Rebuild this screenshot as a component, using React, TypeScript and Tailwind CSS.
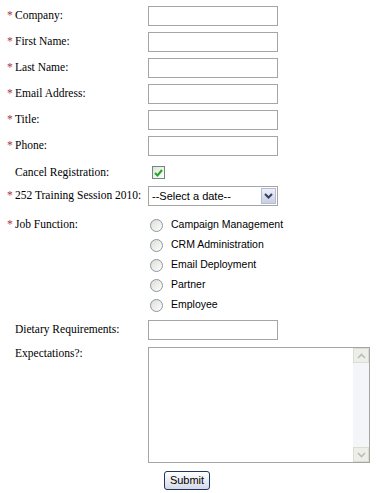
import React from 'react'

const labelFont = { fontFamily: '"Liberation Serif", "Times New Roman", serif' }

const Star = () => (
  <span className="inline-block w-[8px] text-[#a8344c]">*</span>
)

const Label = ({ text, req }: { text: string; req?: boolean }) => (
  <div className="w-[141px] shrink-0 text-[11.5px] text-black whitespace-nowrap" style={labelFont}>
    {req ? <Star /> : <span className="inline-block w-[8px]" />}
    {text}
  </div>
)

const TextBox = () => (
  <div className="h-[20px] w-[130px] border border-[#a5a5a5] bg-white" />
)

const InputRow = ({ text, req }: { text: string; req?: boolean }) => (
  <div className="flex h-[26px] items-center">
    <Label text={text} req={req} />
    <TextBox />
  </div>
)

const Radio = ({ text }: { text: string }) => (
  <div className="flex h-[20px] items-center">
    <span className="ml-[2px] h-[13px] w-[13px] rounded-full border border-[#8c969c] bg-gradient-to-br from-[#dcdcd6] to-white" />
    <span className="ml-[8px] text-[10.5px] text-black" style={{ fontFamily: '"Liberation Sans", Arial, sans-serif' }}>
      {text}
    </span>
  </div>
)

const Arrow = ({ up }: { up?: boolean }) => (
  <svg width="9" height="6" viewBox="0 0 9 6">
    <polyline
      points={up ? '1,5 4.5,1.5 8,5' : '1,1 4.5,4.5 8,1'}
      fill="none"
      stroke="#b8bcbc"
      strokeWidth="1.6"
    />
  </svg>
)

export default function App() {
  return (
    <div className="min-h-[493px] w-[379px] bg-white pl-[7px] pt-[3px]">
      <InputRow text="Company:" req />
      <InputRow text="First Name:" req />
      <InputRow text="Last Name:" req />
      <InputRow text="Email Address:" req />
      <InputRow text="Title:" req />
      <InputRow text="Phone:" req />

      <div className="flex h-[27px] items-center">
        <Label text="Cancel Registration:" />
        <span className="ml-[4px] flex h-[13px] w-[13px] items-center justify-center border border-[#6f8a7c] bg-gradient-to-br from-[#dfe4dc] to-white">
          <svg width="9" height="8" viewBox="0 0 9 8">
            <polyline points="1,4 3.5,6.5 8,1" fill="none" stroke="#22a52a" strokeWidth="2" />
          </svg>
        </span>
      </div>

      <div className="flex h-[28px] items-start">
        <div className="flex h-[20px] items-center">
          <Label text="252 Training Session 2010:" req />
        </div>
        <div className="flex h-[20px] w-[130px] items-center justify-between border border-[#a5a5a5] bg-white">
          <span className="pl-[3px] text-[11px] text-black" style={{ fontFamily: '"Liberation Sans", Arial, sans-serif' }}>
            --Select a date--
          </span>
          <span className="mr-[1px] flex h-[16px] w-[15px] items-center justify-center border border-[#b5bcd4] bg-gradient-to-b from-[#eef0f8] to-[#c9cee2]">
            <svg width="9" height="6" viewBox="0 0 9 6">
              <polyline points="1,1 4.5,4.5 8,1" fill="none" stroke="#34405e" strokeWidth="2" />
            </svg>
          </span>
        </div>
      </div>

      <div className="flex items-start pt-[1px]">
        <div className="flex h-[20px] items-center">
          <Label text="Job Function:" req />
        </div>
        <div className="flex flex-col">
          <Radio text="Campaign Management" />
          <Radio text="CRM Administration" />
          <Radio text="Email Deployment" />
          <Radio text="Partner" />
          <Radio text="Employee" />
        </div>
      </div>

      <div className="flex h-[30px] items-center">
        <Label text="Dietary Requirements:" />
        <TextBox />
      </div>

      <div className="flex items-start">
        <div className="mt-[2px] flex h-[14px] items-center">
          <Label text="Expectations?:" />
        </div>
        <div className="mt-[2px] flex h-[116px] w-[222px] justify-end border border-[#a5a5a5] bg-white">
          <div className="flex w-[16px] flex-col justify-between bg-[#f4f5f9]">
            <span className="flex h-[15px] items-center justify-center border border-[#dcdcd2] bg-[#eeeee8]">
              <Arrow up />
            </span>
            <span className="flex h-[15px] items-center justify-center border border-[#dcdcd2] bg-[#eeeee8]">
              <Arrow />
            </span>
          </div>
        </div>
      </div>

      <div className="mt-[8px] flex">
        <div className="w-[141px] shrink-0" />
        <button
          className="ml-[16px] flex h-[19px] w-[46px] items-center justify-center rounded-[3px] border border-[#1f3660] bg-gradient-to-b from-white to-[#d6d9e8] text-[11px] text-black"
          style={{ fontFamily: '"Liberation Sans", Arial, sans-serif' }}
        >
          Submit
        </button>
      </div>
    </div>
  )
}
